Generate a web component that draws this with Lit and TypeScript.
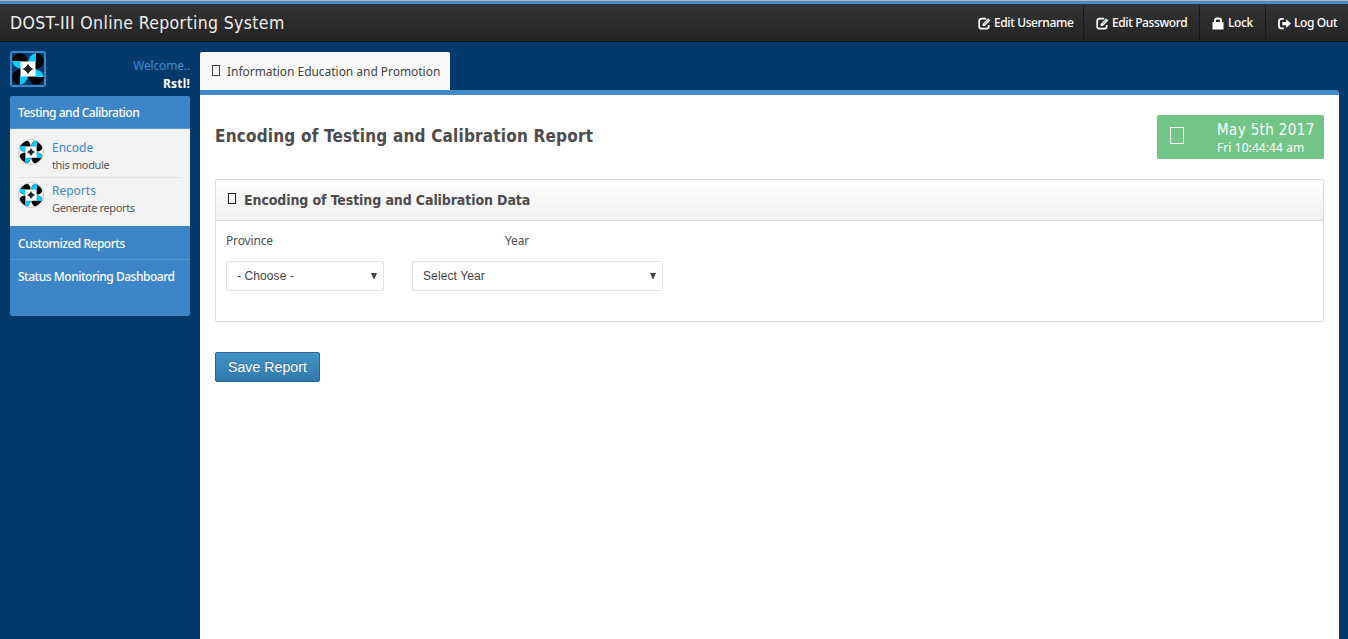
import { LitElement, html, css, svg } from "lit";
import { customElement, property } from "lit/decorators.js";

@customElement("agency-logo")
class AgencyLogo extends LitElement {
  static styles = css`
    :host { display: block; }
    svg { display: block; width: 100%; height: 100%; }
  `;
  render() {
    const corner = (a: number) => svg`<g transform="rotate(${a} 16 16)">
      <circle cx="7.8" cy="7.8" r="7.6" fill="#000"/><path d="M0 8H9V16L5 14.6Q1 13 0 8Z" fill="#0cf"/></g>`;
    return html`<svg viewBox="0 0 32 32">
      ${[0, 90, 180, 270].map(corner)}
      <path d="M8.5 8.5H23.5V23.5H8.5Z" fill="#fff"/>
      <path d="M16 11.5L17.8 14.2L20.5 16L17.8 17.8L16 20.5L14.2 17.8L11.5 16L14.2 14.2Z" fill="#222" stroke="#222"/>
    </svg>`;
  }
}

@customElement("nav-icon")
class NavIcon extends LitElement {
  @property() name = "edit";
  static styles = css`
    :host { display: block; width: 13px; height: 13px; }
    svg { display: block; }
  `;
  render() {
    const shapes: Record<string, unknown> = {
      edit: svg`<path d="M8.2 1.6H3.6Q1.2 1.6 1.2 4V9.4Q1.2 11.7 3.6 11.7H8.3Q10.7 11.7 10.7 9.4V8" fill="none" stroke="#fff" stroke-width="1.7"/><path d="M4.6 6.9L10.2 1.2L12.4 3.4L6.8 9H4.6Z" fill="#fff"/><path d="M6 7.4L10.6 2.9" stroke="#292929" stroke-width=".6"/>`,
      lock: svg`<path d="M3 6V3.6Q3 1.4 5 1.4H7Q9 1.4 9 3.6V6" fill="none" stroke="#fff" stroke-width="2"/><rect x=".5" y="5" width="11" height="7.5" rx=".5" fill="#fff"/>`,
      out: svg`<path d="M5.8 1.9H3.5Q1 1.9 1 4.3V8.9Q1 11.3 3.5 11.3H5.8" fill="none" stroke="#fff" stroke-width="1.8"/><path d="M4.3 4.9H8.2V2.2L13 6.6L8.2 11V8.3H4.3Z" fill="#fff"/>`,
    };
    return html`<svg width="13" height="13" viewBox="0 0 13 13">${shapes[this.name]}</svg>`;
  }
}

@customElement("app-root")
class AppRoot extends LitElement {
  static styles = css`
    :host {
      display: flex; flex-direction: column; box-sizing: border-box; width: 100%; height: 639px;
      overflow: hidden; background: #04396c; color: #4d4d4d;
      font: 12px/16px "Noto Sans", "Open Sans", sans-serif;
    }
    * { box-sizing: border-box; }
    span, div, h1, h2 { white-space: nowrap; }
    .topbar {
      flex: none; height: 42px; display: flex; justify-content: space-between;
      border-top: 1px solid #b8b8b8; border-bottom: 1px solid #101010;
      background: linear-gradient(#428bca 3px, #333 3px, #242424);
    }
    .brand { padding: 10px 0 0 10px; font: 17.5px/24px "DejaVu Sans Condensed", "DejaVu Sans", sans-serif; font-stretch: condensed; letter-spacing: .36px; color: #eee; }
    .nav { display: flex; padding-top: 4px; letter-spacing: -.38px; }
    .nav div { display: flex; align-items: center; gap: 3px; padding: 0 0 0 12px; color: #fff; font-weight: 500; border-left: 1px solid #191919; }
    .nav div:first-child { border-left: 0; width: 118px; padding-left: 13px; }
    .nav .w2 { width: 116px; }
    .nav .w3 { width: 66px; }
    .nav .w4 { width: 83px; }
    .body { flex: 1; display: flex; min-height: 0; }
    .side { width: 200px; padding: 9px 10px 0; }
    .user { display: flex; justify-content: space-between; height: 45px; }
    .avatar { width: 36px; height: 36px; padding: 1px; border: 1px solid #3b86c8; border-radius: 2px; box-shadow: inset 0 0 0 1px #3b86c8; }
    .hello { padding-top: 6px; text-align: right; line-height: 18px; color: #3f8cd0; }
    .hello .w { display: block; font-size: 12px; letter-spacing: -.15px; }
    .hello b { display: block; color: #fff; letter-spacing: .2px; }
    .menu { height: 220px; background: #3c86c8; border-radius: 2px; overflow: hidden; color: #fff; }
    .head { height: 33px; padding: 0 8px; line-height: 33px; border-bottom: 1px solid #5598d2; font-weight: 500; letter-spacing: -.48px; }
    .head.strong { height: 34px; line-height: 35px; }
    .head.last { height: 33px; line-height: 33px; border: 0; }
    .items { height: 97px; background: #f3f3f3; padding: 5px 8px 0; }
    .item { display: flex; gap: 8px; height: 43px; padding-top: 4px; border-bottom: 1px solid #e2e2e2; }
    .item.first { height: 44px; padding-top: 5px; }
    .item:last-child { border: 0; }
    .badge { width: 26px; height: 26px; border-radius: 50%; overflow: hidden; border: 1px solid #c4c4c4; background: #fff; }
    .badge agency-logo { width: 24px; height: 24px; }
    .item .name { font-size: 12px; line-height: 18px; color: #4186cb; }
    .item .desc { font-size: 11px; line-height: 16px; color: #555; letter-spacing: -.36px; }
    .page { width: 1139px; padding-top: 10px; display: flex; flex-direction: column; }
    .tab { width: 250px; height: 38px; background: #fafafa; border-radius: 2px 2px 0 0; display: flex; align-items: center; padding: 1px 0 0 12px; gap: 7px; font-size: 12px; letter-spacing: -.04px; color: #444; }
    .box { width: 8px; height: 11px; border: 1px solid currentColor; }
    .tab .box { margin-top: -2px; }
    .content { flex: 1; background: #fff; border-top: 5px solid #428bca; border-radius: 0 3px 0 0; padding: 20px 15px 0; }
    .title { display: flex; justify-content: space-between; height: 64px; }
    h1, h2 { margin: 0; font-family: "DejaVu Sans Condensed", "DejaVu Sans", sans-serif; font-stretch: condensed; font-weight: bold; color: #4c4c4c; }
    h1 { font-size: 17px; line-height: 42px; letter-spacing: .19px; }
    .clock { width: 167px; height: 44px; background: #72c587; border-radius: 2px; color: #fff; display: flex; padding: 5px 0 0 13px; gap: 33px; }
    .clock .box { width: 14px; height: 17px; margin-top: 7px; }
    .clock .date { font: 15px/20px "DejaVu Sans Condensed", "DejaVu Sans", sans-serif; font-stretch: condensed; letter-spacing: .37px; }
    .clock .time { line-height: 16px; font-size: 12px; letter-spacing: .08px; }
    .panel { height: 143px; border: 1px solid #ddd; border-radius: 2px; }
    .panel-head { height: 41px; display: flex; align-items: center; gap: 8px; padding: 0 12px; border-bottom: 1px solid #d8d8d8; background: linear-gradient(#fff, #f0f0f0); }
    .panel-head .box { color: #222; margin-top: -3px; }
    h2 { font-size: 14px; line-height: 20px; letter-spacing: -.1px; }
    .labels { display: grid; grid-template-columns: 279px auto; padding: 11px 10px 0; line-height: 18px; letter-spacing: -.15px; }
    .fields { display: flex; gap: 28px; padding: 11px 10px 0; }
    .select { width: 158px; height: 30px; border: 1px solid #e2e2e2; border-radius: 2px; display: flex; align-items: center; justify-content: space-between; padding: 0 6px 0 10px; font: 12px/16px "Liberation Sans", Arial, sans-serif; letter-spacing: .1px; color: #444; }
    .select.wide { width: 251px; }
    .save { margin-top: 30px; width: 105px; height: 30px; padding: 0; border: 1px solid #27648f; border-radius: 2px; background: linear-gradient(#4393c6, #3379ab); color: #fff; font: 14px/26px "Liberation Sans", Arial, sans-serif; letter-spacing: .1px; text-shadow: 0 -1px 0 rgba(0, 0, 0, .25); display: block; }
    .arrow { display: block; }
  `;
  arrow() {
    return html`<svg class="arrow" width="6" height="6" viewBox="0 0 6 6"><path d="M0 0H6L3.4 6H2.6Z" fill="#444"/></svg>`;
  }
  render() {
    return html`
      <div class="topbar">
        <div class="brand"><span>DOST-III Online Reporting System</span></div>
        <div class="nav">
          <div><nav-icon name="edit"></nav-icon><span>Edit Username</span></div>
          <div class="w2"><nav-icon name="edit"></nav-icon><span>Edit Password</span></div>
          <div class="w3"><nav-icon name="lock"></nav-icon><span>Lock</span></div>
          <div class="w4"><nav-icon name="out"></nav-icon><span>Log Out</span></div>
        </div>
      </div>
      <div class="body">
        <div class="side">
          <div class="user">
            <div class="avatar"><agency-logo></agency-logo></div>
            <div class="hello"><span class="w">Welcome..</span><b>Rstl!</b></div>
          </div>
          <div class="menu">
            <div class="head"><span>Testing and Calibration</span></div>
            <div class="items">
              <div class="item first"><div class="badge"><agency-logo></agency-logo></div>
                <div><div class="name">Encode</div><div class="desc">this module</div></div></div>
              <div class="item"><div class="badge"><agency-logo></agency-logo></div>
                <div><div class="name">Reports</div><div class="desc">Generate reports</div></div></div>
            </div>
            <div class="head strong"><span>Customized Reports</span></div>
            <div class="head last"><span>Status Monitoring Dashboard</span></div>
          </div>
        </div>
        <div class="page">
          <div class="tab"><i class="box"></i><span>Information Education and Promotion</span></div>
          <div class="content">
            <div class="title">
              <h1>Encoding of Testing and Calibration Report</h1>
              <div class="clock"><i class="box"></i>
                <div><div class="date">May 5th 2017</div><div class="time">Fri 10:44:44 am</div></div></div>
            </div>
            <div class="panel">
              <div class="panel-head"><i class="box"></i><h2>Encoding of Testing and Calibration Data</h2></div>
              <div class="labels"><span>Province</span><span>Year</span></div>
              <div class="fields">
                <div class="select"><span>- Choose -</span>${this.arrow()}</div>
                <div class="select wide"><span>Select Year</span>${this.arrow()}</div>
              </div>
            </div>
            <button class="save">Save Report</button>
          </div>
        </div>
      </div>`;
  }
}
